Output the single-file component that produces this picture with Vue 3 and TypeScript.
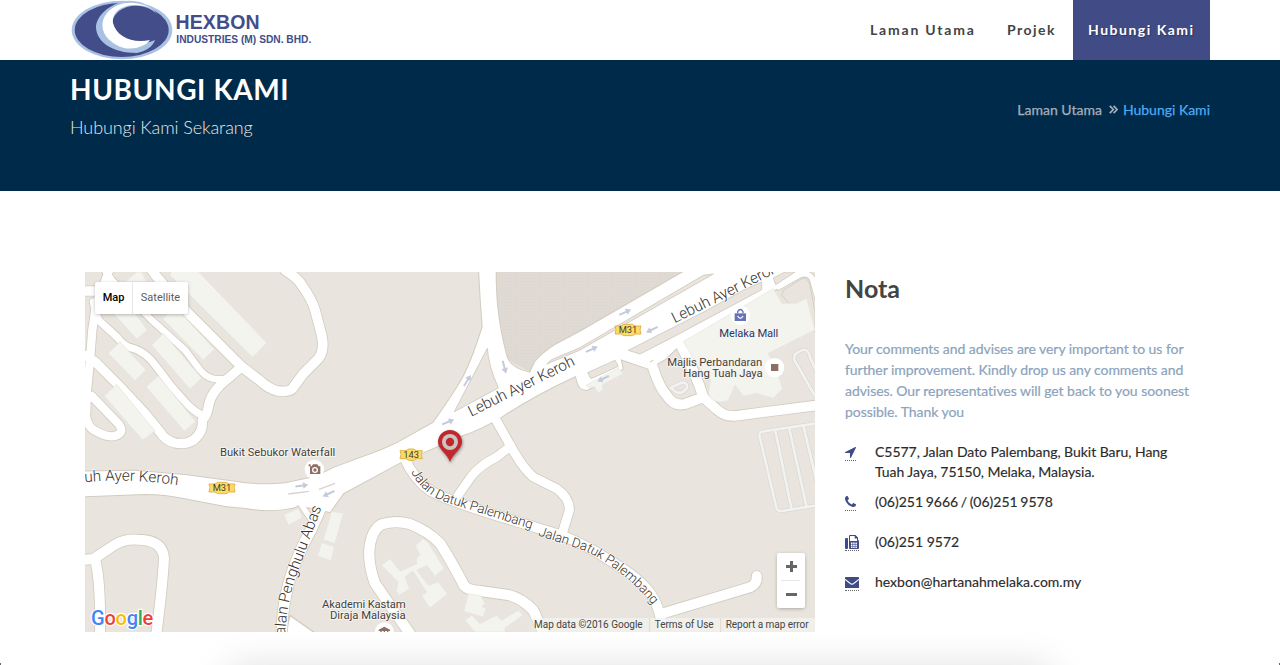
<script setup lang="ts">
interface Road { d: string; w: number }
interface Arrow { x: number; y: number; r: number }
interface Shield { x: number; y: number; w: number; label: string }

const navItems = [
  { label: 'Laman Utama', kind: 'wide' },
  { label: 'Projek', kind: 'short' },
  { label: 'Hubungi Kami', kind: 'active' },
]

const contacts = [
  { icon: 'arrow', lines: ['C5577, Jalan Dato Palembang, Bukit Baru, Hang', 'Tuah Jaya, 75150, Melaka, Malaysia.'] },
  { icon: 'phone', lines: ['(06)251 9666 / (06)251 9578'] },
  { icon: 'fax', lines: ['(06)251 9572'] },
  { icon: 'mail', lines: ['hexbon@hartanahmelaka.com.my'] },
]

const notes = [
  'Your comments and advises are very important to us for',
  'further improvement. Kindly drop us any comments and',
  'advises. Our representatives will get back to you soonest',
  'possible. Thank you',
]

// Map units are a third of a CSS pixel.
const highway =
  'M-10 599L150 596L300 609L450 629Q530 642 600 634L690 615L750 586L890 534L935 514L1045 452Q1100 375 1130 324Q1160 270 1193 164Q1186 80 1182 -10H1232Q1232 70 1238 114Q1246 185 1265 254Q1276 290 1335 302L1350 270Q1370 245 1410 219L1485 179L1812 -10H2180L2065 56L1795 209L1740 262L1690 290L1607 262L1613 290Q1560 330 1505 354Q1480 350 1478 332L1472 312Q1350 368 1250 434Q1190 470 1135 489L950 569L775 664L735 720L640 700L630 706Q560 722 480 708L420 702L300 679Q240 666 180 666L-10 673Z'

const roads: Road[] = [
  { d: 'M580 -30L600 -6Q640 20 650 39Q680 80 690 114L710 190Q720 235 700 260L655 305L622 350Q610 362 575 356Q550 350 520 322L470 284L400 214L310 124L215 14L190 -20', w: 29 },
  { d: 'M470 284L405 340Q375 370 370 405Q366 430 352 444Q355 475 335 495Q315 520 270 513Q240 505 225 480L180 424L100 339L30 269L0 250', w: 28 },
  { d: 'M410 322Q370 325 345 294L300 234L200 144L80 24L50 -20', w: 20 },
  { d: 'M352 430Q330 420 310 400L260 344L215 285Q180 235 130 225Q110 215 95 194L40 144L25 90', w: 22 },
  { d: 'M78 -20L58 34L34 94L22 174L15 264L6 354L3 434Q10 468 30 476Q70 500 95 490Q120 480 100 455L20 372', w: 25 },
  { d: 'M-10 57H40', w: 28 },
  { d: 'M1225 430L1290 545Q1320 595 1345 615L1415 650Q1455 680 1453 715L1430 790', w: 27 },
  { d: 'M1278 522L1235 555Q1185 580 1160 612L1112 680', w: 26 },
  { d: 'M958 556Q985 620 1035 656Q1100 690 1250 735L1430 790Q1510 822 1585 872Q1665 920 1697 965Q1722 1000 1730 1060', w: 29 },
  { d: 'M1730 1025L1995 946Q2018 935 2015 912', w: 30 },
  { d: 'M985 1100L870 934Q850 880 853 834Q858 775 890 757Q930 744 975 756Q1030 778 1065 814Q1095 860 1138 942Q1150 955 1185 957L1270 969Q1310 978 1345 1015L1375 1080', w: 31 },
  { d: 'M-10 864L25 861L90 818Q120 800 160 803Q235 805 237 860Q232 950 212 1100', w: 30 },
  { d: 'M32 869Q48 940 45 1100', w: 30 },
  { d: 'M720 680L680 770Q635 850 612 930Q590 1010 590 1100', w: 32 },
  { d: 'M650 700L683 750', w: 16 },
  { d: 'M1690 245L1705 290Q1725 350 1745 370Q1765 404 1800 396L1855 376Q1835 310 1785 215', w: 30 },
  { d: 'M1855 376L1895 412Q1920 436 1955 431L2210 398', w: 29 },
  { d: 'M2030 -20L2050 60', w: 30 },
  { d: 'M2080 45L2145 8Q2170 0 2182 20L2204 100', w: 16 },
]

const islands = [
  'M1108 419L1207 229Q1210 280 1240 348Z',
  'M1485 227L1855 10L1885 6L1485 234L1385 276L1400 263Z',
  'M1630 235L1665 246L1755 200L2030 53V30L1980 52L1860 118Z',
  'M2072 38L2130 0H2100L2065 18Z',
  'M1508 302L1590 265L1600 283L1518 320Z',
  'M2090 70L2095 55L2150 20Q2168 14 2175 40L2190 120V180Z',
]

const lanes = [
  'M2190 372L2127 262Q2125 242 2155 234Q2170 230 2175 255L2195 300',
  'M1755 346L1770 358Q1790 370 1806 348Q1810 332 1790 332L1755 348',
  'M2195 454L2035 478Q2020 482 2024 494L2074 706Q2078 719 2090 717L2195 700',
  'M2070 472L2120 712M2112 466L2165 705M2155 460L2200 650',
]

const buildings = [
  'M260 -6H335L545 212L503 256L255 10Z',
  'M233 140L270 104L388 232L355 264Z',
  'M200 219L235 184L350 319L315 351Z',
  'M85 124L150 124L187 174L155 201Z',
  'M120 30L155 0H170L185 29Z',
  'M70 244L105 209L183 294L150 326Z',
  'M183 344L220 312L332 449L298 477Z',
  'M58 372L95 337L210 477L173 504Z',
  'M597 728L640 710L652 736L610 760Z',
  'M740 718L775 724L750 814L715 804Z',
  'M710 812L748 824L738 866L698 852Z',
  'M890 880L915 860L945 898L995 876V858L1005 850L992 820L1015 800L1030 812L1077 890L1050 912L1025 880L995 895L1030 940L1060 930L1087 966L1035 1008L1010 972L1025 960L983 896L960 915L973 950L942 970L934 955L940 930Z',
  'M1137 1018L1150 965L1188 972L1200 995L1190 1003L1203 1010L1195 1035Z',
  'M1140 1045L1160 1030L1185 1055L1235 1030L1250 1045L1300 1015L1313 1030L1260 1068V1080H1170Z',
  'M1503 340L1600 288L1614 305L1553 338V355L1540 362L1528 344Q1510 350 1503 340Z',
  'M1795 209L2065 50L2090 94L2135 94L2165 79L2190 174L2050 244L2085 324L2092 350L2065 379L2015 364L1975 372L1950 339L1930 386Q1880 400 1870 364L1877 324L1840 284Z',
]

const arrows: Arrow[] = [
  { x: 1147, y: 326, r: -58 }, { x: 1089, y: 450, r: -22 }, { x: 1258, y: 285, r: 75 },
  { x: 1520, y: 232, r: -24 }, { x: 1620, y: 121, r: -24 }, { x: 1701, y: 173, r: 154 },
  { x: 1555, y: 320, r: 154 }, { x: 650, y: 641, r: -8 }, { x: 731, y: 665, r: 155 },
]

const shields: Shield[] = [
  { x: 372, y: 631, w: 78, label: 'M31' },
  { x: 1590, y: 157, w: 78, label: 'M31' },
  { x: 945, y: 531, w: 67, label: '143' },
]
</script>

<template>
  <div class="page">
    <header class="header">
      <svg class="logo" width="250" height="60" viewBox="0 0 250 60">
        <ellipse cx="52" cy="30" rx="50.3" ry="29.3" fill="#a9c2e3" />
        <ellipse cx="51.7" cy="30" rx="47" ry="27" fill="#424d8a" />
        <path d="M87 14C78 3 67 0 56 1C39 4 26 16 26 28C27 42 42 53 67 53C77 51 83 46 85 40C76 44 68 44 65 43C42 39 36 22 49 11C60 3 77 4 87 14Z" fill="#a9c2e3" />
        <path d="M87 13C73 0 49 -1 37 13C26 27 36 43 54 48C65 50 76 46 80 40C62 44 46 36 43 23C41 9 58 2 74 6C79 7 83 9 87 13Z" fill="#fff" />
        <text class="logo-name" x="105.5" y="28.7" textLength="84">HEXBON</text>
        <text class="logo-sub" x="106.3" y="43.3" textLength="135">INDUSTRIES (M) SDN. BHD.</text>
      </svg>
      <nav class="nav">
        <a v-for="item in navItems" :key="item.label" class="nav-item" :class="item.kind">{{ item.label }}</a>
      </nav>
    </header>

    <section class="banner">
      <div>
        <h1>HUBUNGI KAMI</h1>
        <p class="tagline">Hubungi Kami Sekarang</p>
      </div>
      <div class="crumbs">
        <span>Laman Utama</span>
        <svg width="9" height="9" viewBox="0 0 9 9"><path d="M.8.8L4.3 4.500L.8 8.200M4.600.8L8.100 4.500L4.600 8.200" fill="none" stroke="#a5afbe" stroke-width="1.700" /></svg>
        <span class="current">Hubungi Kami</span>
      </div>
    </section>

    <main class="content">
      <div class="map">
        <svg class="map-art" width="730" height="360" viewBox="0 0 2190 1080">
          <defs>
            <pattern id="dots" width="9" height="9" patternUnits="userSpaceOnUse">
              <rect width="9" height="9" fill="#dfdad3" /><rect width="3" height="3" fill="#dbd5ce" />
            </pattern>
            <path id="road-west" d="M-50 637Q110 612 300 643" />
            <path id="road-dp1" d="M978 600Q1015 672 1100 696L1400 790" />
            <path id="road-dp2" d="M1358 790L1500 836Q1630 900 1725 1026" />
            <path id="road-pa" d="M600 1115Q600 1010 634 910L716 690" />
            <linearGradient id="strip" x1="0" x2="1"><stop offset="0" stop-color="#f4f3ef" stop-opacity="0" /><stop offset=".06" stop-color="#f4f3ef" stop-opacity=".75" /></linearGradient>
          </defs>
          <rect width="2190" height="1080" fill="#e9e5de" />
          <path d="M1225 -10V100L1265 260L1335 300L1370 249L1500 169L1815 -10Z" fill="url(#dots)" />
          <path d="M615 1030L700 1090H600Z" fill="#fff" stroke="#d3cdc2" stroke-width="4" />
          <g fill="none" stroke="#d2ccbf" stroke-linecap="round" stroke-linejoin="round">
            <path :d="highway" stroke-width="6" />
            <path v-for="road in roads" :key="road.d" :d="road.d" :stroke-width="road.w + 5" />
          </g>
          <path :d="highway" fill="#fff" />
          <path v-for="road in roads" :key="road.d" :d="road.d" :stroke-width="road.w" class="road" />
          <path v-for="d in islands" :key="d" :d="d" fill="#e9e5de" stroke="#d5cfc4" stroke-width="3" />
          <path v-for="d in buildings" :key="d" :d="d" fill="#f4f4ee" stroke="#e6e4de" stroke-width="2" />
          <path v-for="d in lanes" :key="'c' + d" :d="d" class="lane-edge" />
          <path v-for="d in lanes" :key="d" :d="d" class="lane" />
          <path d="M610 666L672 658M702 652L750 634M1695 270L1705 264" fill="none" stroke="#d9d3c9" stroke-width="4" />
          <g v-for="(a, i) in arrows" :key="i" :transform="`translate(${a.x} ${a.y}) rotate(${a.r})`" fill="#c5cbdd">
            <path d="M-19 -3H4V-10L20 0L4 10V3H-19Z" />
          </g>
          <g v-for="(s, i) in shields" :key="'s' + i" :transform="`translate(${s.x} ${s.y})`">
            <path :d="`M0 5L18 5L26 0H${s.w - 26}L${s.w - 18} 5H${s.w}L${s.w - 3} 16L${s.w} 29H${s.w - 18}L${s.w - 26} 34H26L18 29H0L3 16Z`" fill="#fddd61" stroke="#e3b24d" stroke-width="3" />
            <text class="shield" :x="s.w / 2" y="27">{{ s.label }}</text>
          </g>

          <g class="street">
            <text transform="translate(1159 434) rotate(-26.5)" textLength="350">Lebuh Ayer Keroh</text>
            <text transform="translate(1769 154) rotate(-26.5)" textLength="350">Lebuh Ayer Keroh</text>
            <text textLength="330"><textPath href="#road-west">ebuh Ayer Keroh</textPath></text>
            <text class="narrow" textLength="410"><textPath href="#road-dp1">Jalan Datuk Palembang</textPath></text>
            <text class="narrow" textLength="412"><textPath href="#road-dp2">Jalan Datuk Palembang</textPath></text>
            <text textLength="425"><textPath href="#road-pa">Jalan Penghulu Abas</textPath></text>
          </g>

          <g>
            <circle cx="1966" cy="130" r="29" fill="#fff" />
            <path d="M1949 124H1983V147H1949Z" fill="#6673b9" />
            <path d="M1958 124V119Q1966 106 1974 119V124" fill="none" stroke="#6673b9" stroke-width="4" />
            <path d="M1958 132Q1966 146 1974 132" fill="none" stroke="#fff" stroke-width="4" />
            <circle cx="2069" cy="287" r="29" fill="#fff" />
            <path d="M2058 276H2080V297H2058Z" fill="#8d6e63" />
            <circle cx="688" cy="592" r="29" fill="#fff" />
            <path d="M675 583H680L684 577H697L701 583H706V606H675Z" fill="#8d6e63" />
            <circle cx="690" cy="594" r="7" fill="none" stroke="#fff" stroke-width="4" />
            <path d="M671 577h6v6h-6z" fill="#8d6e63" />
            <circle cx="898" cy="1080" r="29" fill="#fff" />
            <path d="M881 1073L898 1064L915 1073V1077H881ZM886 1077H890V1082H886ZM896 1077H900V1082H896ZM906 1077H910V1082H906Z" fill="#8d6e63" />
          </g>
          <g class="place">
            <text x="405" y="552" textLength="346">Bukit Sebukor Waterfall</text>
            <text x="1903" y="194" textLength="177" class="mall">Melaka Mall</text>
            <text x="1747" y="281" textLength="285">Majlis Perbandaran</text>
            <text x="1795" y="315" textLength="238">Hang Tuah Jaya</text>
            <text x="711" y="1007" textLength="251">Akademi Kastam</text>
            <text x="735" y="1041" textLength="227">Diraja Malaysia</text>
          </g>

          <path class="pin" d="M1095 571C1089 547 1059 532 1059 510A36 36 0 0 1 1131 510C1131 532 1101 547 1095 571Z" fill="#c1272d" />
          <circle cx="1095" cy="510" r="24" fill="#c9c5c0" />
          <circle cx="1095" cy="510" r="12.500" fill="#c1272d" />

          <rect x="1325" y="1038" width="865" height="42" fill="url(#strip)" />
          <path d="M1694 1038V1080M1907 1038V1080" stroke="#dedbd5" stroke-width="3" />
          <g class="legal">
            <text x="1347" y="1068" textLength="326">Map data ©2016 Google</text>
            <text x="1709" y="1068" textLength="177">Terms of Use</text>
            <text x="1922" y="1068" textLength="249">Report a map error</text>
          </g>
          <text class="google" x="18" y="1058" textLength="187"><tspan fill="#4285f4">G</tspan><tspan fill="#ea4335">o</tspan><tspan fill="#fbbc05">o</tspan><tspan fill="#4285f4">g</tspan><tspan fill="#34a853">l</tspan><tspan fill="#ea4335">e</tspan></text>
        </svg>
        <div class="map-type"><b>Map</b><span>Satellite</span></div>
        <div class="zoom">
          <svg width="28" height="55" viewBox="0 0 28 55">
            <path d="M9 13.500H20M14.500 8V19M9 41.500H20" stroke="#666" stroke-width="3" />
            <path d="M4 27.500H23" stroke="#e6e6e6" />
          </svg>
        </div>
      </div>

      <aside class="info">
        <h2>Nota</h2>
        <p class="note"><span v-for="line in notes" :key="line">{{ line }}</span></p>
        <div v-for="c in contacts" :key="c.icon" class="contact">
          <div class="icon-cell">
            <span class="icon">
              <svg v-if="c.icon === 'arrow'" width="11" height="12" viewBox="192 256 1408 1536"><path d="M1593 349l-640 1280q-17 35-57 35-5 0-15-2-22-5-35.500-22.500t-13.500-39.500v-576h-576q-22 0-39.500-13.500t-22.500-35.500 4-42 29-30l1280-640q13-7 29-7 27 0 45 19 15 14 18.500 34.500t-6.500 39.500z" /></svg>
              <svg v-else-if="c.icon === 'phone'" width="11" height="13" viewBox="192 128 1408 1664"><path d="M1600 1240q0 27-10 70.500t-21 68.500q-21 50-122 106-94 51-186 51-27 0-53-3.500t-57.500-12.500-47-14.500-55.500-20.500-49-18q-98-35-175-83-127-79-264-216t-216-264q-48-77-83-175-3-9-18-49t-20.500-55.500-14.500-47-12.500-57.500-3.500-53q0-92 51-186 56-101 106-122 25-11 68.500-21t70.500-10q14 0 21 3 18 6 53 76 11 19 30 54t35 63.500 31 53.500q3 4 17.500 25t21.500 35.500 7 28.500q0 20-28.500 50t-62 55-62 53-28.500 46q0 9 5 22.500t8.500 20.500 14 24 11.500 19q76 137 174 235t235 174q2 1 19 11.500t24 14 20.500 8.500 22.500 5q18 0 46-28.500t53-62 55-62 50-28.500q14 0 28.500 7t35.500 21.500 25 17.500q25 15 53.500 31t63.500 35 54 30q70 35 76 53 3 7 3 21z" /></svg>
              <svg v-else-if="c.icon === 'fax'" width="14" height="14" viewBox="0 0 14 14"><path fill-rule="evenodd" d="M0 4Q0 3 1 3H2Q3 3 3 4V13Q3 14 2 14H1Q0 14 0 13ZM4 1Q4 0 5 0H10.500L13 2.500V5Q14 5.300 14 6V13Q14 14 13 14H5Q4 14 4 13ZM5 1V6H12V3.500H9.700V1ZM6 7.500V9H7.500V7.500ZM8.200 7.500V9H9.700V7.500ZM10.400 7.500V9H11.900V7.500ZM6 9.600V11H7.500V9.600ZM8.200 9.600V11H9.700V9.600ZM10.400 9.600V11H11.900V9.600ZM6 11.600V12.900H7.500V11.600ZM8.200 11.600V12.900H9.700V11.600ZM10.400 11.600V12.900H11.900V11.600Z" /></svg>
              <svg v-else width="14" height="12" viewBox="0 0 14 12"><rect width="14" height="11" rx=".6" /><path d="M0 2.400L5 6.300Q7 8 9 6.300L14 2.400" fill="none" stroke="#fff" stroke-width="1.100" /></svg>
            </span>
          </div>
          <div class="contact-text" :class="c.icon"><span v-for="line in c.lines" :key="line">{{ line }}</span></div>
        </div>
      </aside>
    </main>
    <div class="shade"></div>
    <i class="corner left"></i><i class="corner right"></i>
  </div>
</template>

<style>
body { margin: 0; }
</style>

<style scoped>
.page { position: relative; width: 1280px; height: 665px; overflow: hidden; background: #fff; font-family: Lato, "Open Sans", sans-serif; font-size: 14px; color: #2b2b2b; font-variant-ligatures: none; }
.header { display: flex; justify-content: space-between; height: 60px; padding: 0 70px; }
.logo-name { font: bold 19.500px "Liberation Sans", Arial, sans-serif; fill: #424d8a; }
.logo-sub { font: bold 10.200px "Liberation Sans", Arial, sans-serif; fill: #424d8a; }
.nav { display: flex; }
.nav-item { box-sizing: border-box; padding-left: 15px; line-height: 60px; font-weight: 700; font-size: 14px; color: #444; white-space: nowrap; }
.nav-item.wide { width: 137px; letter-spacing: 1.800px; }
.nav-item.short { width: 81px; letter-spacing: 1.450px; }
.nav-item.active { width: 137px; letter-spacing: 1.500px; background: #414b86; color: #fff; text-shadow: 1px 1px 1px rgba(0, 0, 0, .3); }
.banner { display: flex; justify-content: space-between; height: 131px; padding: 0 70px; background: #002a49; box-sizing: border-box; }
h1 { margin: 12px 0 0; font-size: 28px; line-height: 34px; font-weight: 700; letter-spacing: .6px; color: #fff; }
.tagline { margin: 9px 0 0; font-size: 18px; line-height: 24px; font-weight: 300; letter-spacing: -.1px; color: #e4e7ea; }
.crumbs { display: flex; align-items: center; height: 20px; margin-top: 39px; color: #a5afbe; -webkit-text-stroke: .25px currentColor; }
.crumbs svg { margin: 1px 5px 0 7px; }
.current { color: #4ea9f5; }
.content { display: flex; gap: 30px; padding: 81px 70px 0 85px; }
.map { position: relative; width: 730px; height: 360px; overflow: hidden; }
.map-art { display: block; font-family: Roboto, sans-serif; }
.road { fill: none; stroke: #fff; stroke-linecap: round; stroke-linejoin: round; }
.lane-edge { fill: none; stroke: #d9d7d2; stroke-width: 12; }
.lane { fill: none; stroke: #f2f2f0; stroke-width: 8; }
.shield { font-size: 28px; fill: #423b33; text-anchor: middle; }
.street { font-size: 46px; font-weight: 300; fill: #39322e; stroke: #fff; stroke-width: 4px; paint-order: stroke; }
.narrow { font-size: 40px; }
.place { font-size: 34px; fill: #473f3b; stroke: #f5f3f0; stroke-width: 6px; paint-order: stroke; stroke-linejoin: round; }
.mall { fill: #2f3667; }
.pin { filter: drop-shadow(2px 4px 4px rgba(0, 0, 0, .4)); }
.legal { font-size: 30px; fill: #444; }
.google { font-size: 60px; font-weight: 500; stroke: #fff; stroke-width: 7px; paint-order: stroke; stroke-linejoin: round; }
.map-type { position: absolute; left: 10px; top: 10px; display: flex; height: 32px; border-radius: 2px; background: #fff; box-shadow: 0 1px 4px -1px rgba(0, 0, 0, .4); font: 11px/31px Roboto, sans-serif; color: #5c5c5c; }
.map-type b { width: 37px; text-align: center; font-weight: 500; color: #000; border-right: 1px solid #e6e6e6; }
.map-type span { width: 55px; text-align: center; }
.zoom { position: absolute; left: 692px; top: 281px; width: 28px; height: 55px; border-radius: 2px; background: #fff; box-shadow: 0 1px 4px -1px rgba(0, 0, 0, .4); }
.info { width: 365px; }
h2 { margin: 1px 0 0; font-size: 25px; line-height: 30px; font-weight: 700; color: #444; }
.note { margin: 35px 0 20px; line-height: 21px; letter-spacing: -.055px; color: #8ba3bc; -webkit-text-stroke: .2px currentColor; }
.note span, .contact-text span { display: block; white-space: nowrap; }
.contact { display: flex; min-height: 30px; margin-bottom: 10px; line-height: 20px; }
.contact-text { -webkit-text-stroke: .15px currentColor; }
.contact-text.arrow { letter-spacing: -.04px; }
.contact-text.phone { word-spacing: -1px; }
.icon-cell { width: 30px; height: 19px; display: flex; align-items: flex-end; }
.icon { display: flex; padding-bottom: 1px; border-bottom: 1px dotted #666; }
.icon svg { display: block; fill: #414b86; }
.shade { position: absolute; left: 232px; top: 672px; width: 816px; height: 90px; border-radius: 10px; box-shadow: 0 0 38px 6px rgba(0, 0, 0, .125); }
.corner { position: absolute; bottom: 0; width: 1px; height: 2px; background: #666; }
.corner.left { left: 0; }
.corner.right { right: 0; }
</style>
